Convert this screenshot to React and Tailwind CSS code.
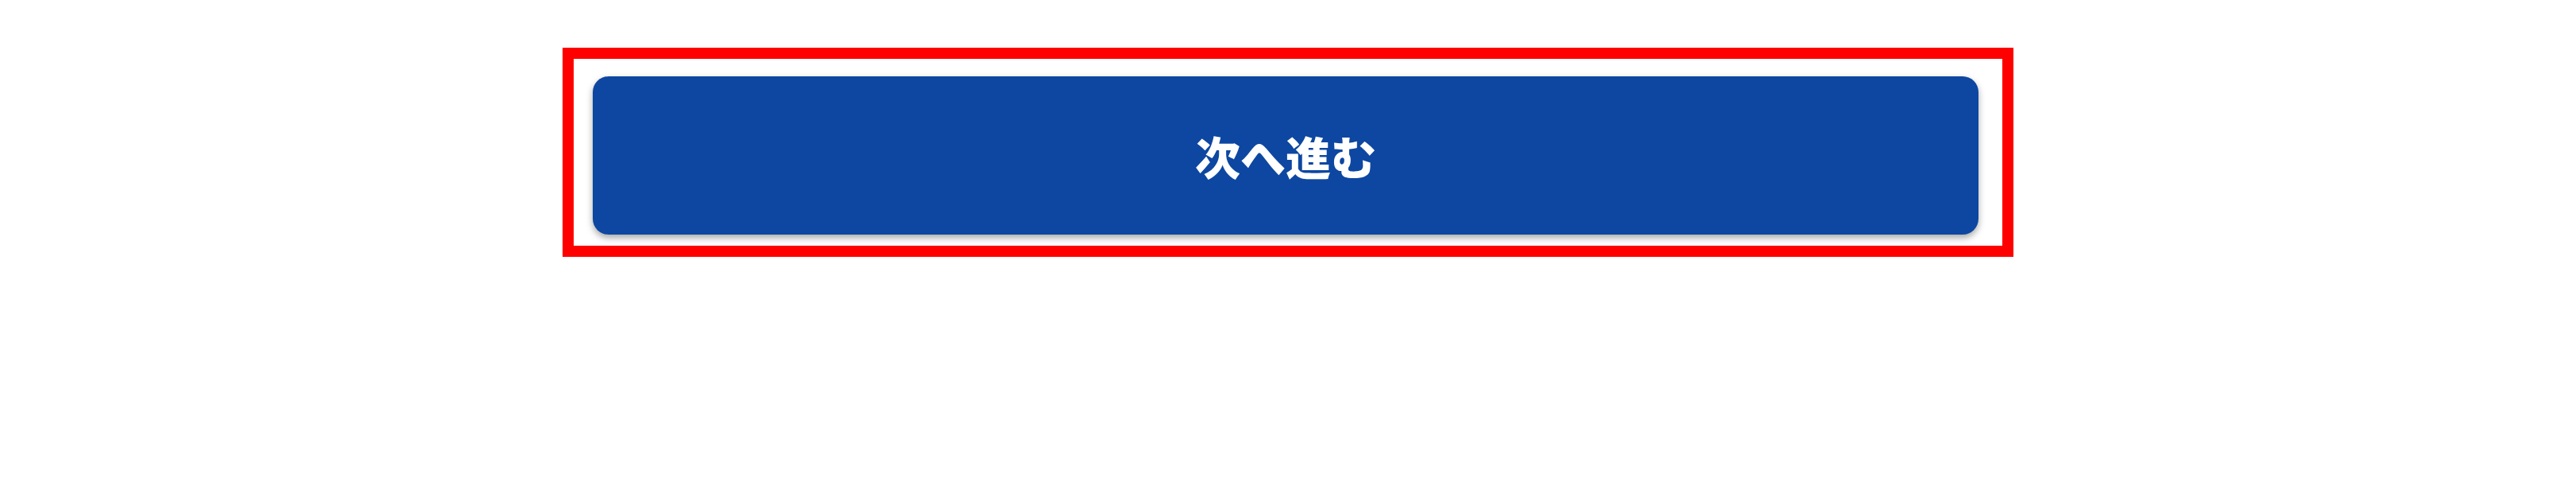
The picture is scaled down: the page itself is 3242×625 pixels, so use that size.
export default function App() {
  return (
    <div className="min-h-[625px] bg-white pt-[60px]">
      <div className="mx-auto w-[1826px] border-[14px] border-[#ff0000] pl-[24px] pr-[30px] pt-[22px] pb-[14px]">
        <button
          type="button"
          className="flex h-[199px] w-full items-center justify-center rounded-[20px] bg-[#0d47a1] text-[57px] font-black text-white shadow-[0_4px_8px_rgba(0,0,0,0.35)]"
          style={{ fontFamily: '"Noto Sans CJK JP", "Noto Sans", sans-serif' }}
        >
          次へ進む
        </button>
      </div>
    </div>
  );
}
